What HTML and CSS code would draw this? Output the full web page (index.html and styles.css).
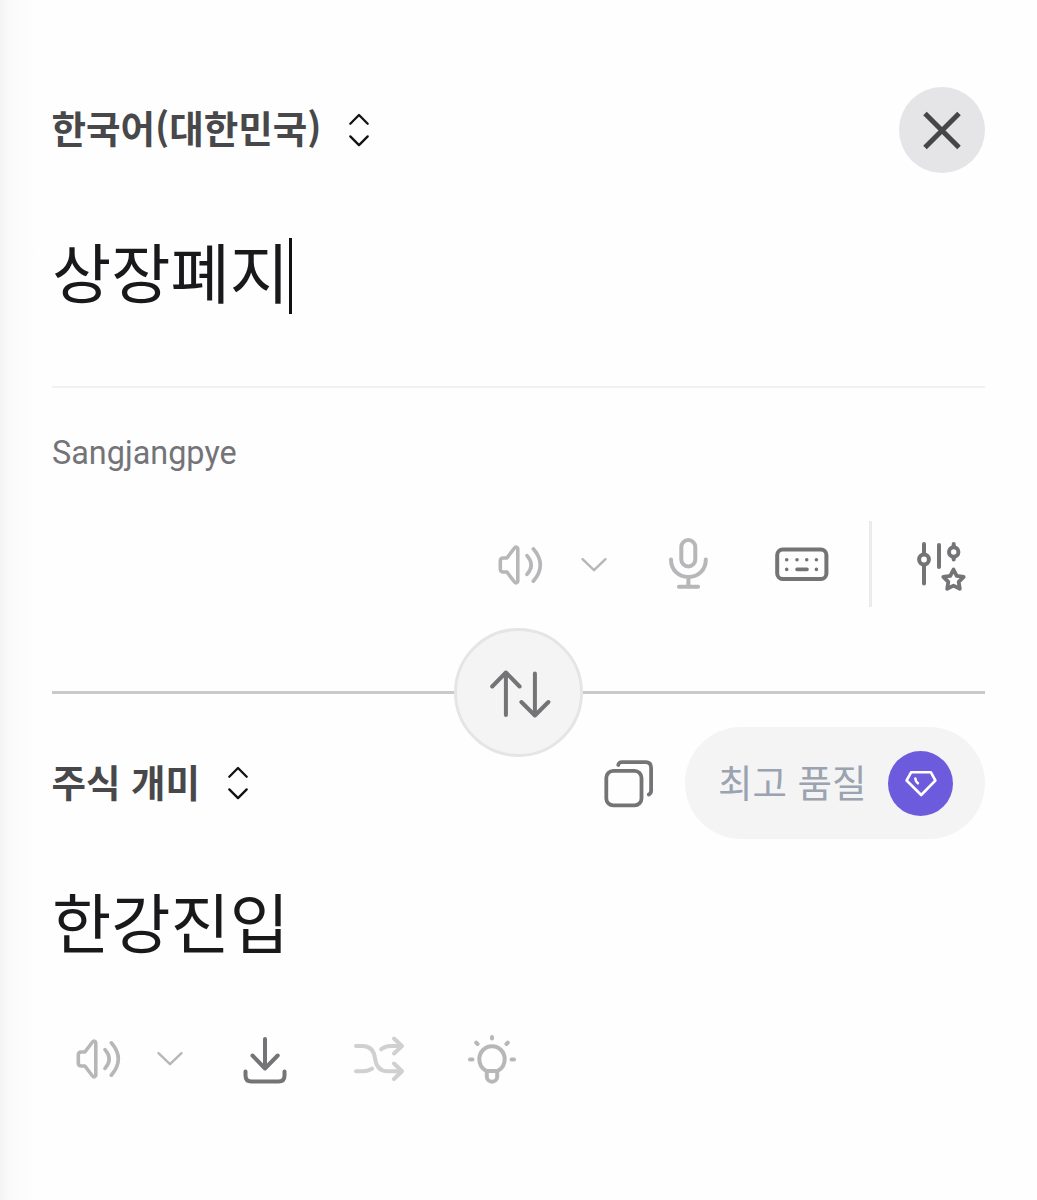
FILE: index.html
```html
<!DOCTYPE html>
<html lang="ko">
<head>
<meta charset="utf-8">
<title>번역</title>
<link rel="stylesheet" href="styles.css">
</head>
<body>
<svg class="defs" aria-hidden="true">
  <symbol id="selector" viewBox="0 0 24 36"><path d="M3.300 11.700 12 3l8.700 8.700M3.300 24.400l8.700 8.700 8.700-8.700"/></symbol>
  <symbol id="chevron" viewBox="0 0 28 18"><path d="M2.500 3.200 14 14.200 25.500 3.200"/></symbol>
  <symbol id="speaker" viewBox="0 0 50 50"><path d="M4.300 21q0-3 3-3h3.600L18.500 8c1.200-1.500 3.300-1 3.300.8v32.400c0 1.800-2.100 2.300-3.300.8L10.900 32H7.300q-3 0-3-3zM31 15.600q8.400 9.400 0 18.800M37.300 8.800q14 16.200 0 32.400"/></symbol>
</svg>
<main class="translator">
  <header class="source-head">
    <button class="language"><span>한국어(대한민국)</span><svg class="selector"><use href="#selector"/></svg></button>
    <button class="close" aria-label="닫기"><svg width="38" height="38" viewBox="0 0 38 38"><path d="M2 2.500l34 34M36 2.500l-34 34"/></svg></button>
  </header>
  <div class="phrase source"><span>상장폐지</span><i class="caret"></i></div>
  <p class="romanized">Sangjangpye</p>
  <div class="tools source-tools">
    <svg class="speaker muted"><use href="#speaker"/></svg>
    <svg class="chevron muted"><use href="#chevron"/></svg>
    <svg class="mic muted" viewBox="0 0 45 56"><rect x="15.300" y="3" width="14" height="26.500" rx="7"/><path d="M5 22.500C5 33 12.500 40 22.400 40S39.800 33 39.800 22.500M22.400 40v9.700M12.900 49.700h19.200"/></svg>
    <svg class="keyboard" viewBox="0 0 58 40"><rect x="4.200" y="4.600" width="49.200" height="29.400" rx="5.500"/><path class="keys" d="M13.700 14.700h0M24 14.700h0M33.700 14.700h0M43.400 14.700h0M13.700 24.400h0M24 24.400h10M43.400 24.400h0"/></svg>
    <span class="separator"></span>
    <svg class="tune" viewBox="0 0 52 52"><path d="M9 5v10M9 26v18.500M24 6v22M38.700 5v3M38.700 18v2.500"/><circle cx="9" cy="20.500" r="4.900"/><circle cx="38.700" cy="13" r="4.700"/><path class="star" d="M38.500 30.500l3.200 6.300 7 1.100-5 5 1.100 6.900-6.300-3.200-6.300 3.200 1.100-6.900-5-5 7-1.100z"/></svg>
  </div>
  <div class="divider">
    <button class="swap" aria-label="언어 바꾸기"><svg width="64" height="52" viewBox="0 0 64 52"><path d="M18.900 48V5.500M5.200 19.500 18.900 5.500 32.600 19.500M47.900 6.500V48.500M34.400 35l13.500 13.500L61.400 35"/></svg></button>
  </div>
  <div class="target-head">
    <button class="language"><span>주식 개미</span><svg class="selector"><use href="#selector"/></svg></button>
    <svg class="copy" viewBox="0 0 52 52"><rect x="5.300" y="13.800" width="35.200" height="34.600" rx="7"/><path d="M17.300 8c.4-2.100 1.700-2.900 3.600-2.900h23.600q5.600 0 5.600 5.600V33.500c0 2-.8 3.300-2.300 4"/></svg>
    <button class="quality"><span>최고 품질</span><span class="gem"><svg width="34" height="30" viewBox="0 0 34 30"><path d="M7.200 4.200h19.600l4.600 8.300L17.200 27 2.600 12.500z"/><path class="shine" d="M11.300 10.500q.2 2.800 2.600 4.700"/></svg></span></button>
  </div>
  <div class="phrase result">한강진입</div>
  <div class="tools result-tools">
    <svg class="speaker muted"><use href="#speaker"/></svg>
    <svg class="chevron muted"><use href="#chevron"/></svg>
    <svg class="download" viewBox="0 0 48 50"><path d="M24 5v29M11.500 21.500 24 34.500l12.700-13M4.500 37.500v4q0 6 6 6h27q6 0 6-6v-4"/></svg>
    <svg class="shuffle" viewBox="0 0 54 50"><path d="M4 12h6.500c8 0 11.500 4.500 12.500 12.300s5 13 12.500 13H50M42 29.500l8 7.800L42 45M4 37.300h6c3.500 0 7-.8 10-2.600M29.200 15.300C32 13 35 12 38.500 12H50M42 4.500l8 7.500-8 7.500"/></svg>
    <svg class="bulb muted" viewBox="0 0 52 52"><path d="M20.300 38C15.600 35.500 13.300 30.500 13.300 26a12.700 12.700 0 0 1 25.400 0c0 4.500-2.300 9.500-7 12zM20.800 38v5.500a5.200 5.200 0 0 0 10.400 0V38M26 4v1.500M10.200 9.700l1.300 1.300M41.800 9.700l-1.300 1.300M4 26.500h2.500M45.500 26.500H48"/></svg>
  </div>
</main>
</body>
</html>
```
FILE: styles.css
```css
* { box-sizing: border-box; }
body { margin: 0; font-family: Roboto, "Noto Sans CJK KR", sans-serif; }
button { border: 0; padding: 0; background: none; font: inherit; color: inherit; }
svg { display: block; flex: none; fill: none; stroke: #747477; stroke-width: 4; stroke-linecap: round; stroke-linejoin: round; overflow: visible; }
.defs { display: none; }

.translator {
  display: flex;
  flex-direction: column;
  height: 1200px;
  padding: 86px 52px 0;
  background: linear-gradient(to right, #f4f4f4 0, #fafafa 10px, #fefefe 36px);
}

.source-head, .target-head, .tools, .language, .quality, .phrase { display: flex; align-items: center; }
.source-head { height: 87px; justify-content: space-between; }
.language { font: 700 37.5px/56px "Noto Sans CJK KR", sans-serif; color: #48484b; white-space: nowrap; }
.language > span { margin-left: -.5px; padding-bottom: 5px; }
.selector { width: 24px; height: 36px; margin-left: 26px; stroke: #111; stroke-width: 2.3; }
.close { display: grid; place-items: center; width: 86px; height: 86px; border-radius: 50%; background: #e5e5e8; }
.close svg { stroke: #454647; stroke-width: 5; stroke-linecap: butt; }

.phrase { height: 76px; font: 400 64.4px/64px "Noto Sans CJK KR", sans-serif; color: #19191b; white-space: nowrap; }
.source { margin-top: 65px; }
.source span { padding-bottom: 13px; }
.caret { width: 3px; height: 76px; background: #111; }
.romanized {
  margin: 72px 0 0;
  padding-top: 44px;
  border-top: 2px solid #f1f1f1;
  height: 135px;
  font: 400 32.400px/42px Roboto, sans-serif;
  color: #747478;
}

.source-tools { height: 86px; justify-content: flex-end; padding: 2px 18px 0 0; }
.muted { stroke: #b7b7b9; }
.speaker { width: 50px; height: 50px; stroke-width: 3.6; }
.chevron { width: 28px; height: 18px; margin-left: 34px; stroke-width: 2.4; }
.mic { width: 45px; height: 56px; margin-left: 58px; }
.keyboard { width: 58px; height: 40px; margin-left: 62px; }
.keyboard .keys { stroke-width: 3.6; }
.separator { width: 3px; height: 86px; margin: -2px 0 0 38px; background: #ebebeb; }
.tune { width: 52px; height: 52px; margin-left: 43px; }
.tune .star { stroke-width: 3.8; }

.divider {
  display: grid;
  place-items: center;
  height: 129px;
  margin-top: 21px;
  background: linear-gradient(#c9c9cb, #c9c9cb) center / 100% 3px no-repeat;
}
.swap { display: grid; place-items: center; width: 129px; height: 129px; border: 3px solid #e5e5e6; border-radius: 50%; background: #f4f4f5; }

.target-head { height: 112px; margin-top: -30px; }
.copy { width: 52px; height: 52px; margin-left: auto; stroke-width: 3.8; }
.quality {
  justify-content: space-between;
  width: 300px;
  height: 112px;
  margin-left: 32px;
  padding: 0 32px 0 33px;
  border-radius: 56px;
  background: #f4f4f5;
  font: 400 37.500px/56px "Noto Sans CJK KR", sans-serif;
  color: #9aa3af;
  white-space: nowrap;
}
.quality > span:first-child { padding-bottom: 5px; }
.gem { display: grid; place-items: center; width: 65px; height: 65px; border-radius: 50%; background: #6c5cdd; }
.gem svg { stroke: #fff; stroke-width: 2.6; }

.result { margin-top: 49px; padding-bottom: 13px; }
.result-tools { height: 60px; margin-top: 65px; padding-left: 22px; }
.result-tools .chevron { margin-left: 32px; }
.download { width: 48px; height: 50px; margin-left: 57px; }
.shuffle { width: 54px; height: 50px; margin-left: 63px; stroke: #d0d0d1; }
.bulb { width: 52px; height: 52px; margin-left: 60px; }
```
